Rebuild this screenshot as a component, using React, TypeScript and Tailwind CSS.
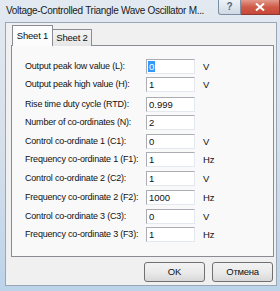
import React from "react";

type Row = { label: string; value: string; unit?: string; mt: string; selected?: boolean };

const rows: Row[] = [
  { label: "Output peak low value (L):", value: "0", unit: "V", mt: "mt-[13px]", selected: true },
  { label: "Output peak high value (H):", value: "1", unit: "V", mt: "mt-[3px]" },
  { label: "Rise time duty cycle (RTD):", value: "0.999", mt: "mt-[5px]" },
  { label: "Number of co-ordinates (N):", value: "2", mt: "mt-[3px]" },
  { label: "Control co-ordinate 1 (C1):", value: "0", unit: "V", mt: "mt-[4px]" },
  { label: "Frequency co-ordinate 1 (F1):", value: "1", unit: "Hz", mt: "mt-[3px]" },
  { label: "Control co-ordinate 2 (C2):", value: "1", unit: "V", mt: "mt-[4px]" },
  { label: "Frequency co-ordinate 2 (F2):", value: "1000", unit: "Hz", mt: "mt-[4px]" },
  { label: "Control co-ordinate 3 (C3):", value: "0", unit: "V", mt: "mt-[4px]" },
  { label: "Frequency co-ordinate 3 (F3):", value: "1", unit: "Hz", mt: "mt-[3px]" },
];

export default function App() {
  return (
    <div
      className="w-[280px] h-[291px] flex flex-col bg-gradient-to-b from-[#e2e9f1] via-[#d6e0ea] to-[#bcd3ea] text-[#111]"
      style={{ fontFamily: '"Liberation Sans", Arial, sans-serif' }}
    >
      {/* Title bar */}
      <div className="h-[22px] flex items-start shrink-0">
        <div className="pl-[6px] pt-[5px] text-[10px] tracking-[-0.3px] leading-[12px] text-[#1a1a1a] whitespace-nowrap">
          Voltage-Controlled Triangle Wave Oscillator M...
        </div>
        <div className="flex-1" />
        <div className="flex">
          <div className="w-[23px] h-[15px] rounded-bl-[3px] border border-t-0 border-[#7f8fa3] bg-gradient-to-b from-[#eef2f7] to-[#cfd9e5] flex items-center justify-center text-[10px] font-bold text-[#55667a] leading-none">
            ?
          </div>
          <div className="w-[39px] h-[15px] border border-t-0 border-l-0 border-[#8a3a33] bg-gradient-to-b from-[#e29a8c] via-[#cf5a48] to-[#c8483a] flex items-center justify-center">
            <svg width="10" height="8" viewBox="0 0 10 8">
              <path d="M1 0.5 L9 7.5 M9 0.5 L1 7.5" stroke="#ffffff" strokeWidth="2" />
            </svg>
          </div>
        </div>
      </div>

      {/* Client area */}
      <div className="ml-[5px] mr-[3px] mb-[5px] flex-1 border border-[#98a6b6] bg-[#f0f0f0] flex flex-col pt-[2px] pl-[5px] pr-[2px]">
        {/* Tabs */}
        <div className="flex items-end h-[21px] relative z-10 pl-[1px]">
          <div className="h-[21px] w-[41px] border border-b-0 border-[#898c95] bg-[#fcfcfc] flex items-center justify-center text-[9.5px] tracking-[-0.2px]">
            Sheet 1
          </div>
          <div className="h-[17px] w-[39px] border border-l-0 border-b-0 border-[#898c95] bg-gradient-to-b from-[#f4f4f4] to-[#e6e6e6] flex items-center justify-center text-[9.5px] tracking-[-0.2px]">
            Sheet 2
          </div>
        </div>
        {/* Panel */}
        <div className="-mt-[1px] h-[212px] border border-[#898c95] bg-[#f9f9f9] flex flex-col pl-[13px]">
          {rows.map((r, i) => (
            <div key={i} className={`flex items-center h-[15px] ${r.mt}`}>
              <div className="w-[121px] text-[9px] tracking-[-0.2px] leading-[15px] whitespace-nowrap">
                {r.label}
              </div>
              <div className="w-[49px] h-[15px] bg-white border border-[#abadb3] border-r-[#e3e9ef] border-b-[#e3e9ef] flex items-center pl-[1px] text-[9.5px] leading-none">
                {r.selected ? (
                  <span className="bg-[#3399ff] text-white px-[1px] h-[11px] flex items-center">{r.value}</span>
                ) : (
                  <span className="pl-[1px]">{r.value}</span>
                )}
              </div>
              {r.unit && <div className="ml-[8px] text-[9.5px] leading-none">{r.unit}</div>}
            </div>
          ))}
        </div>
        {/* Buttons */}
        <div className="flex justify-end mt-[5px] gap-[7px] pr-[1px]">
          <div className="w-[61px] h-[20px] rounded-[3px] border border-[#707070] bg-gradient-to-b from-[#f2f2f2] via-[#ebebeb] to-[#d8d8d8] flex items-center justify-center text-[9.5px]">
            OK
          </div>
          <div className="w-[61px] h-[20px] rounded-[3px] border border-[#707070] bg-gradient-to-b from-[#f2f2f2] via-[#ebebeb] to-[#d8d8d8] flex items-center justify-center text-[9.5px] tracking-[-0.3px]">
            Отмена
          </div>
        </div>
      </div>
    </div>
  );
}
